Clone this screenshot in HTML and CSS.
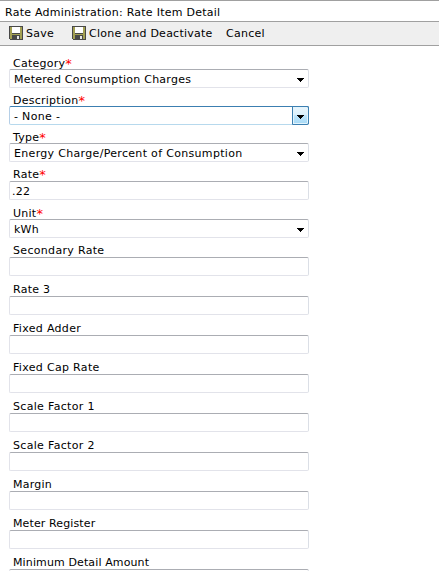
FILE: index.html
```
<!DOCTYPE html>
<html lang="en">
<head>
<meta charset="utf-8">
<title>Rate Administration: Rate Item Detail</title>
<link rel="stylesheet" href="styles.css">
</head>
<body>
<header class="title">Rate Administration: Rate Item Detail</header>
<nav class="toolbar">
  <a class="tool save"><svg class="icon" width="14" height="14" viewBox="0 0 14 14" shape-rendering="crispEdges"><path fill="#484848" d="M0 0H14V14H1V13H0Z"/><path fill="#a3a052" d="M1 1H3V8H11V1H13V13H1Z"/><path fill="#fff" d="M3 1H11V7H3Z"/><path fill="#484848" d="M3 9H11V14H3Z"/><path fill="#e8e8e8" d="M8 10H10V13H8Z"/></svg><span>Save</span></a>
  <a class="tool clone"><svg class="icon" width="14" height="14" viewBox="0 0 14 14" shape-rendering="crispEdges"><path fill="#484848" d="M0 0H14V14H1V13H0Z"/><path fill="#a3a052" d="M1 1H3V8H11V1H13V13H1Z"/><path fill="#fff" d="M3 1H11V7H3Z"/><path fill="#484848" d="M3 9H11V14H3Z"/><path fill="#e8e8e8" d="M8 10H10V13H8Z"/></svg><span>Clone and Deactivate</span></a>
  <a class="tool"><span>Cancel</span></a>
</nav>
<main class="form">
  <div class="field"><div class="label">Category<b>*</b></div><div class="box"><span>Metered Consumption Charges</span><i class="arrow"></i></div></div>
  <div class="field"><div class="label">Description<b>*</b></div><div class="box focus"><span class="wide">- None -</span><i class="arrow"></i></div></div>
  <div class="field"><div class="label">Type<b>*</b></div><div class="box"><span class="wide">Energy Charge/Percent of Consumption</span><i class="arrow"></i></div></div>
  <div class="field text"><div class="label">Rate<b>*</b></div><div class="box"><span>.22</span></div></div>
  <div class="field"><div class="label">Unit<b>*</b></div><div class="box"><span>kWh</span><i class="arrow"></i></div></div>
  <div class="field text"><div class="label wide">Secondary Rate</div><div class="box"></div></div>
  <div class="field text"><div class="label">Rate 3</div><div class="box"></div></div>
  <div class="field text"><div class="label wide">Fixed Adder</div><div class="box"></div></div>
  <div class="field text"><div class="label wide">Fixed Cap Rate</div><div class="box"></div></div>
  <div class="field text"><div class="label wide">Scale Factor 1</div><div class="box"></div></div>
  <div class="field text"><div class="label wide">Scale Factor 2</div><div class="box"></div></div>
  <div class="field text"><div class="label">Margin</div><div class="box"></div></div>
  <div class="field text"><div class="label tight">Meter Register</div><div class="box"></div></div>
  <div class="field text"><div class="label tight">Minimum Detail Amount</div><div class="box"></div></div>
</main>
</body>
</html>
```
FILE: styles.css
```
* { box-sizing: border-box; }
html, body { height: 571px; overflow: hidden; }
body { margin: 0; background: #fff; color: #000; font: 11px/14px "DejaVu Sans", sans-serif; letter-spacing: 0.25px; }
.title { height: 21px; border-top: 1px solid #a0a0a0; padding: 5px 0 0 5px; white-space: nowrap; }
.toolbar { height: 25px; background: #efefef; border: solid #a0a0a0; border-width: 1px 0; display: flex; padding-left: 9px; white-space: nowrap; }
.tool { display: flex; padding-top: 4px; }
.tool span { padding-top: 1px; }
.icon { margin-right: 3px; }
.save { width: 63px; }
.clone { width: 154px; }
.form { padding: 5px 0 0 9px; width: 309px; }
.label { height: 18px; padding: 6px 0 0 4px; white-space: nowrap; }
.label b { color: #f00; font-weight: normal; font-size: 13px; line-height: 0; vertical-align: -1px; }
.text .label { height: 19px; }
.tight { letter-spacing: 0.12px; }
.wide { letter-spacing: 0.32px; }
.text { padding-bottom: 1px; }
.box { height: 19px; border: 1px solid #e2e3ea; border-top-color: #abadb3; border-right-color: #dbdfe6; border-radius: 2px; display: flex; justify-content: space-between; padding: 3px 0 0 4px; white-space: nowrap; }
.text .box { padding-left: 2px; }
.arrow { width: 17px; height: 19px; margin: -4px -1px 0 0; flex: none; border: 1px solid transparent; padding: 8px 4px; }
.arrow::before { content: ""; display: block; width: 7px; height: 4px; background: #000; clip-path: polygon(0 0, 7px 0, 7px 1px, 6px 1px, 6px 2px, 5px 2px, 5px 3px, 4px 3px, 4px 4px, 3px 4px, 3px 3px, 2px 3px, 2px 2px, 1px 2px, 1px 1px, 0 1px); }
.focus { border-color: #3c7fb1 #3c7fb1 #b7d9ed #b5cfe7; }
.focus .arrow { border-color: #3c7fb1; border-radius: 0 2px 2px 0; background: linear-gradient(#eaf6fd 0%, #d9f0fc 50%, #bee6fd 50%, #a7d9f5 100%); background-clip: padding-box; box-shadow: inset 0 0 0 1px #e3f4fc; }
```
